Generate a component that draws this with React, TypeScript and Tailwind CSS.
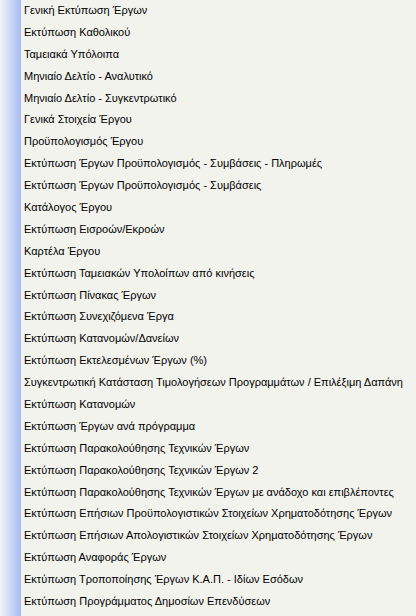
const items = [
  "Γενική Εκτύπωση Έργων",
  "Εκτύπωση Καθολικού",
  "Ταμειακά Υπόλοιπα",
  "Μηνιαίο Δελτίο - Αναλυτικό",
  "Μηνιαίο Δελτίο - Συγκεντρωτικό",
  "Γενικά Στοιχεία Έργου",
  "Προϋπολογισμός Έργου",
  "Εκτύπωση Έργων Προϋπολογισμός - Συμβάσεις - Πληρωμές",
  "Εκτύπωση Έργων Προϋπολογισμός - Συμβάσεις",
  "Κατάλογος Έργου",
  "Εκτύπωση Εισροών/Εκροών",
  "Καρτέλα Έργου",
  "Εκτύπωση Ταμειακών Υπολοίπων από κινήσεις",
  "Εκτύπωση Πίνακας Έργων",
  "Εκτύπωση Συνεχιζόμενα Έργα",
  "Εκτύπωση Κατανομών/Δανείων",
  "Εκτύπωση Εκτελεσμένων Έργων (%)",
  "Συγκεντρωτική Κατάσταση Τιμολογήσεων Προγραμμάτων / Επιλέξιμη Δαπάνη",
  "Εκτύπωση Κατανομών",
  "Εκτύπωση Έργων ανά πρόγραμμα",
  "Εκτύπωση Παρακολούθησης Τεχνικών Έργων",
  "Εκτύπωση Παρακολούθησης Τεχνικών Έργων 2",
  "Εκτύπωση Παρακολούθησης Τεχνικών Έργων με ανάδοχο και επιβλέποντες",
  "Εκτύπωση Επήσιων Προϋπολογιστικών Στοιχείων Χρηματοδότησης Έργων",
  "Εκτύπωση Επήσιων Απολογιστικών Στοιχείων Χρηματοδότησης Έργων",
  "Εκτύπωση Αναφοράς Έργων",
  "Εκτύπωση Τροποποίησης Έργων Κ.Α.Π. - Ιδίων Εσόδων",
  "Εκτύπωση Προγράμματος Δημοσίων Επενδύσεων",
];

export default function App() {
  return (
    <div className="flex h-[616px] w-[416px] overflow-hidden bg-[#f3f3ee] font-['Liberation_Sans',sans-serif] text-[11px] text-black">
      <div className="w-[21px] shrink-0 bg-gradient-to-r from-[#f4f4f6] to-[#a6bcf2]" />
      <ul className="flex flex-col pl-[3px] pt-[3px]">
        {items.map((label) => (
          <li key={label} className="h-[22px] whitespace-nowrap leading-[14px] cursor-pointer hover:underline">
            {label}
          </li>
        ))}
      </ul>
    </div>
  );
}
